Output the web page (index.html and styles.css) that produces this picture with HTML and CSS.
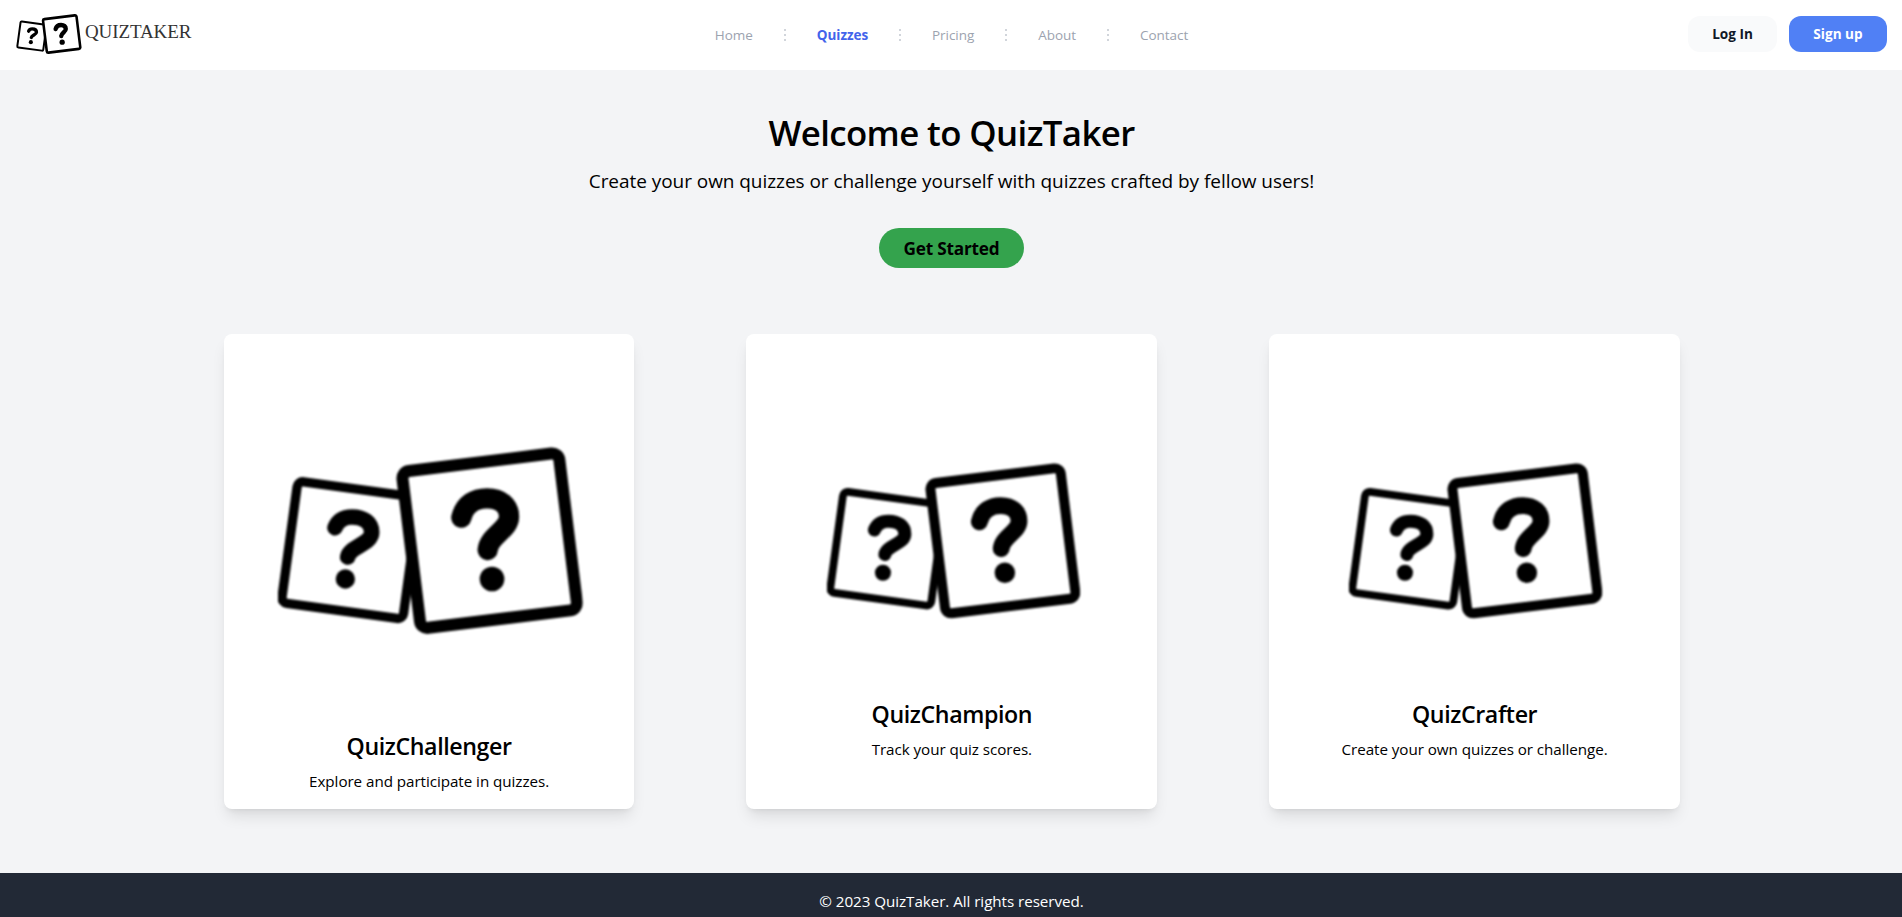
FILE: index.html
```
<!DOCTYPE html>
<html lang="en">
<head>
<meta charset="utf-8">
<title>QuizTaker</title>
<link rel="stylesheet" href="styles.css">
</head>
<body>
<svg class="sprite" width="0" height="0" aria-hidden="true">
  <symbol id="tiles" viewBox="205 381 914 562">
    <g fill="none" stroke="#000" stroke-linecap="round">
      <rect x="-184" y="-184" width="368" height="368" rx="17" stroke-width="28" transform="translate(422 690.5) rotate(7.8)"/>
      <path d="M376 623C386 598 405 591 427 591C462 591 486 608 486 637C486 673 421 678 414 711" stroke-width="47"/>
      <rect x="-237" y="-237" width="474" height="474" rx="22" stroke-width="36" fill="#fff" transform="translate(840 662) rotate(-7)"/>
      <path d="M755 593C765 551 797 535 832 535C872 535 898 556 898 590C898 630 838 646 834 690" stroke-width="61"/>
    </g>
    <circle cx="407" cy="777" r="29"/>
    <circle cx="847" cy="777" r="37"/>
  </symbol>
  <symbol id="dots" viewBox="0 0 4 14">
    <path d="M1 1h2v2H1zM1 6h2v2H1zM1 11h2v2H1z" fill="#d1d5db"/>
  </symbol>
</svg>

<nav class="navbar">
  <a class="brand" href="#">
    <svg class="brand-mark"><use href="#tiles"/></svg>
    <span class="brand-name">QUIZTAKER</span>
  </a>
  <div class="menu">
    <a class="link" href="#">Home</a>
    <svg class="sep"><use href="#dots"/></svg>
    <a class="link active" href="#">Quizzes</a>
    <svg class="sep"><use href="#dots"/></svg>
    <a class="link" href="#">Pricing</a>
    <svg class="sep"><use href="#dots"/></svg>
    <a class="link" href="#">About</a>
    <svg class="sep"><use href="#dots"/></svg>
    <a class="link" href="#">Contact</a>
  </div>
  <div class="actions">
    <a class="btn login" href="#">Log In</a>
    <a class="btn signup" href="#">Sign up</a>
  </div>
</nav>

<main class="main">
  <header class="hero">
    <h1 class="hero-title">Welcome to QuizTaker</h1>
    <p class="hero-text">Create your own quizzes or challenge yourself with quizzes crafted by fellow users!</p>
    <a class="start" href="#">Get Started</a>
  </header>
  <section class="cards">
    <article class="card">
      <div class="art"><svg class="tiles"><use href="#tiles"/></svg></div>
      <h2 class="card-title">QuizChallenger</h2>
      <p class="card-text">Explore and participate in quizzes.</p>
    </article>
    <article class="card">
      <div class="art art-small"><svg class="tiles"><use href="#tiles"/></svg></div>
      <h2 class="card-title">QuizChampion</h2>
      <p class="card-text">Track your quiz scores.</p>
    </article>
    <article class="card">
      <div class="art art-small"><svg class="tiles"><use href="#tiles"/></svg></div>
      <h2 class="card-title">QuizCrafter</h2>
      <p class="card-text">Create your own quizzes or challenge.</p>
    </article>
  </section>
</main>

<footer class="footer"><p class="copy">© 2023 QuizTaker. All rights reserved.</p></footer>
</body>
</html>
```
FILE: styles.css
```
* { box-sizing: border-box; margin: 0; padding: 0; }
html { overflow: hidden; }
body {
  height: 917px;
  display: flex;
  flex-direction: column;
  overflow: hidden;
  background: #f3f4f6;
  color: #000;
  font-family: "Open Sans", "Noto Sans", sans-serif;
  font-size: 15.2px;
  line-height: 24px;
}
a { color: inherit; text-decoration: none; white-space: nowrap; }
.sprite { position: absolute; }

.navbar {
  flex: none;
  height: 70px;
  background: #fff;
  display: grid;
  grid-template-columns: 1fr auto 1fr;
  align-items: start;
  padding: 0 15px 0 16px;
}
.brand { display: flex; padding-top: 14px; }
.brand-mark { width: 66px; height: 40px; overflow: visible; }
.brand-name {
  margin: 6px 0 0 3px;
  font: 19px/24px "Liberation Serif", serif;
  letter-spacing: -0.1px;
  color: #333;
}
.menu { display: flex; align-items: center; padding-top: 25px; }
.link { font-size: 13.5px; line-height: 20px; color: #9ca3af; letter-spacing: -0.05px; }
.link.active { font-weight: 700; color: #4263eb; }
.sep { width: 4px; height: 14px; margin: 0 30px; }
.actions { display: flex; justify-content: flex-end; gap: 12px; padding-top: 16px; }
.btn {
  height: 36px;
  border-radius: 12px;
  font-size: 13.6px;
  font-weight: 700;
  line-height: 36px;
  text-align: center;
}
.login { width: 89px; background: #f9fafb; color: #111827; }
.signup { width: 98px; background: #5080f5; color: #fff; }

.main { flex: none; height: 803px; padding-top: 40px; }
.hero { display: flex; flex-direction: column; align-items: center; padding-left: 1px; }
.hero-title { font-size: 34.8px; line-height: 40px; font-weight: 600; letter-spacing: -0.6px; margin-top: 3px; }
.hero-text { font-size: 19px; line-height: 28px; font-weight: 400; margin-top: 14px; letter-spacing: -0.05px; }
.start {
  width: 145px;
  height: 40px;
  margin-top: 33px;
  border-radius: 20px;
  background: #34a34d;
  font-size: 17.2px;
  font-weight: 700;
  line-height: 41px;
  text-align: center;
  letter-spacing: -0.2px;
}
.cards {
  display: grid;
  grid-template-columns: repeat(3, 1fr);
  gap: 112px;
  margin-top: 66px;
  padding: 0 222px 0 223.7px;
}
.card {
  height: 475px;
  padding: 16px;
  border-radius: 8px;
  background: #fff;
  text-align: center;
  box-shadow: 0 10px 15px -3px rgba(0, 0, 0, .1), 0 4px 6px -4px rgba(0, 0, 0, .1);
}
.art { aspect-ratio: 1; display: flex; align-items: center; justify-content: center; }
.art-small { margin: 32px 32px 0; }
.tiles { width: 80.45%; aspect-ratio: 914 / 562; margin: .9% 0 0 .9%; overflow: visible; filter: blur(.8px); }
.card-title { font-size: 23.2px; line-height: 32px; font-weight: 600; letter-spacing: -0.4px; padding-top: 1px; margin-bottom: -1px; }
.card-text { margin-top: 8px; letter-spacing: -0.05px; }

.footer { flex: none; height: 44px; background: #222936; color: #fff; text-align: center; padding: 16px 0 0 1px; }
.copy { letter-spacing: -0.05px; }
```
